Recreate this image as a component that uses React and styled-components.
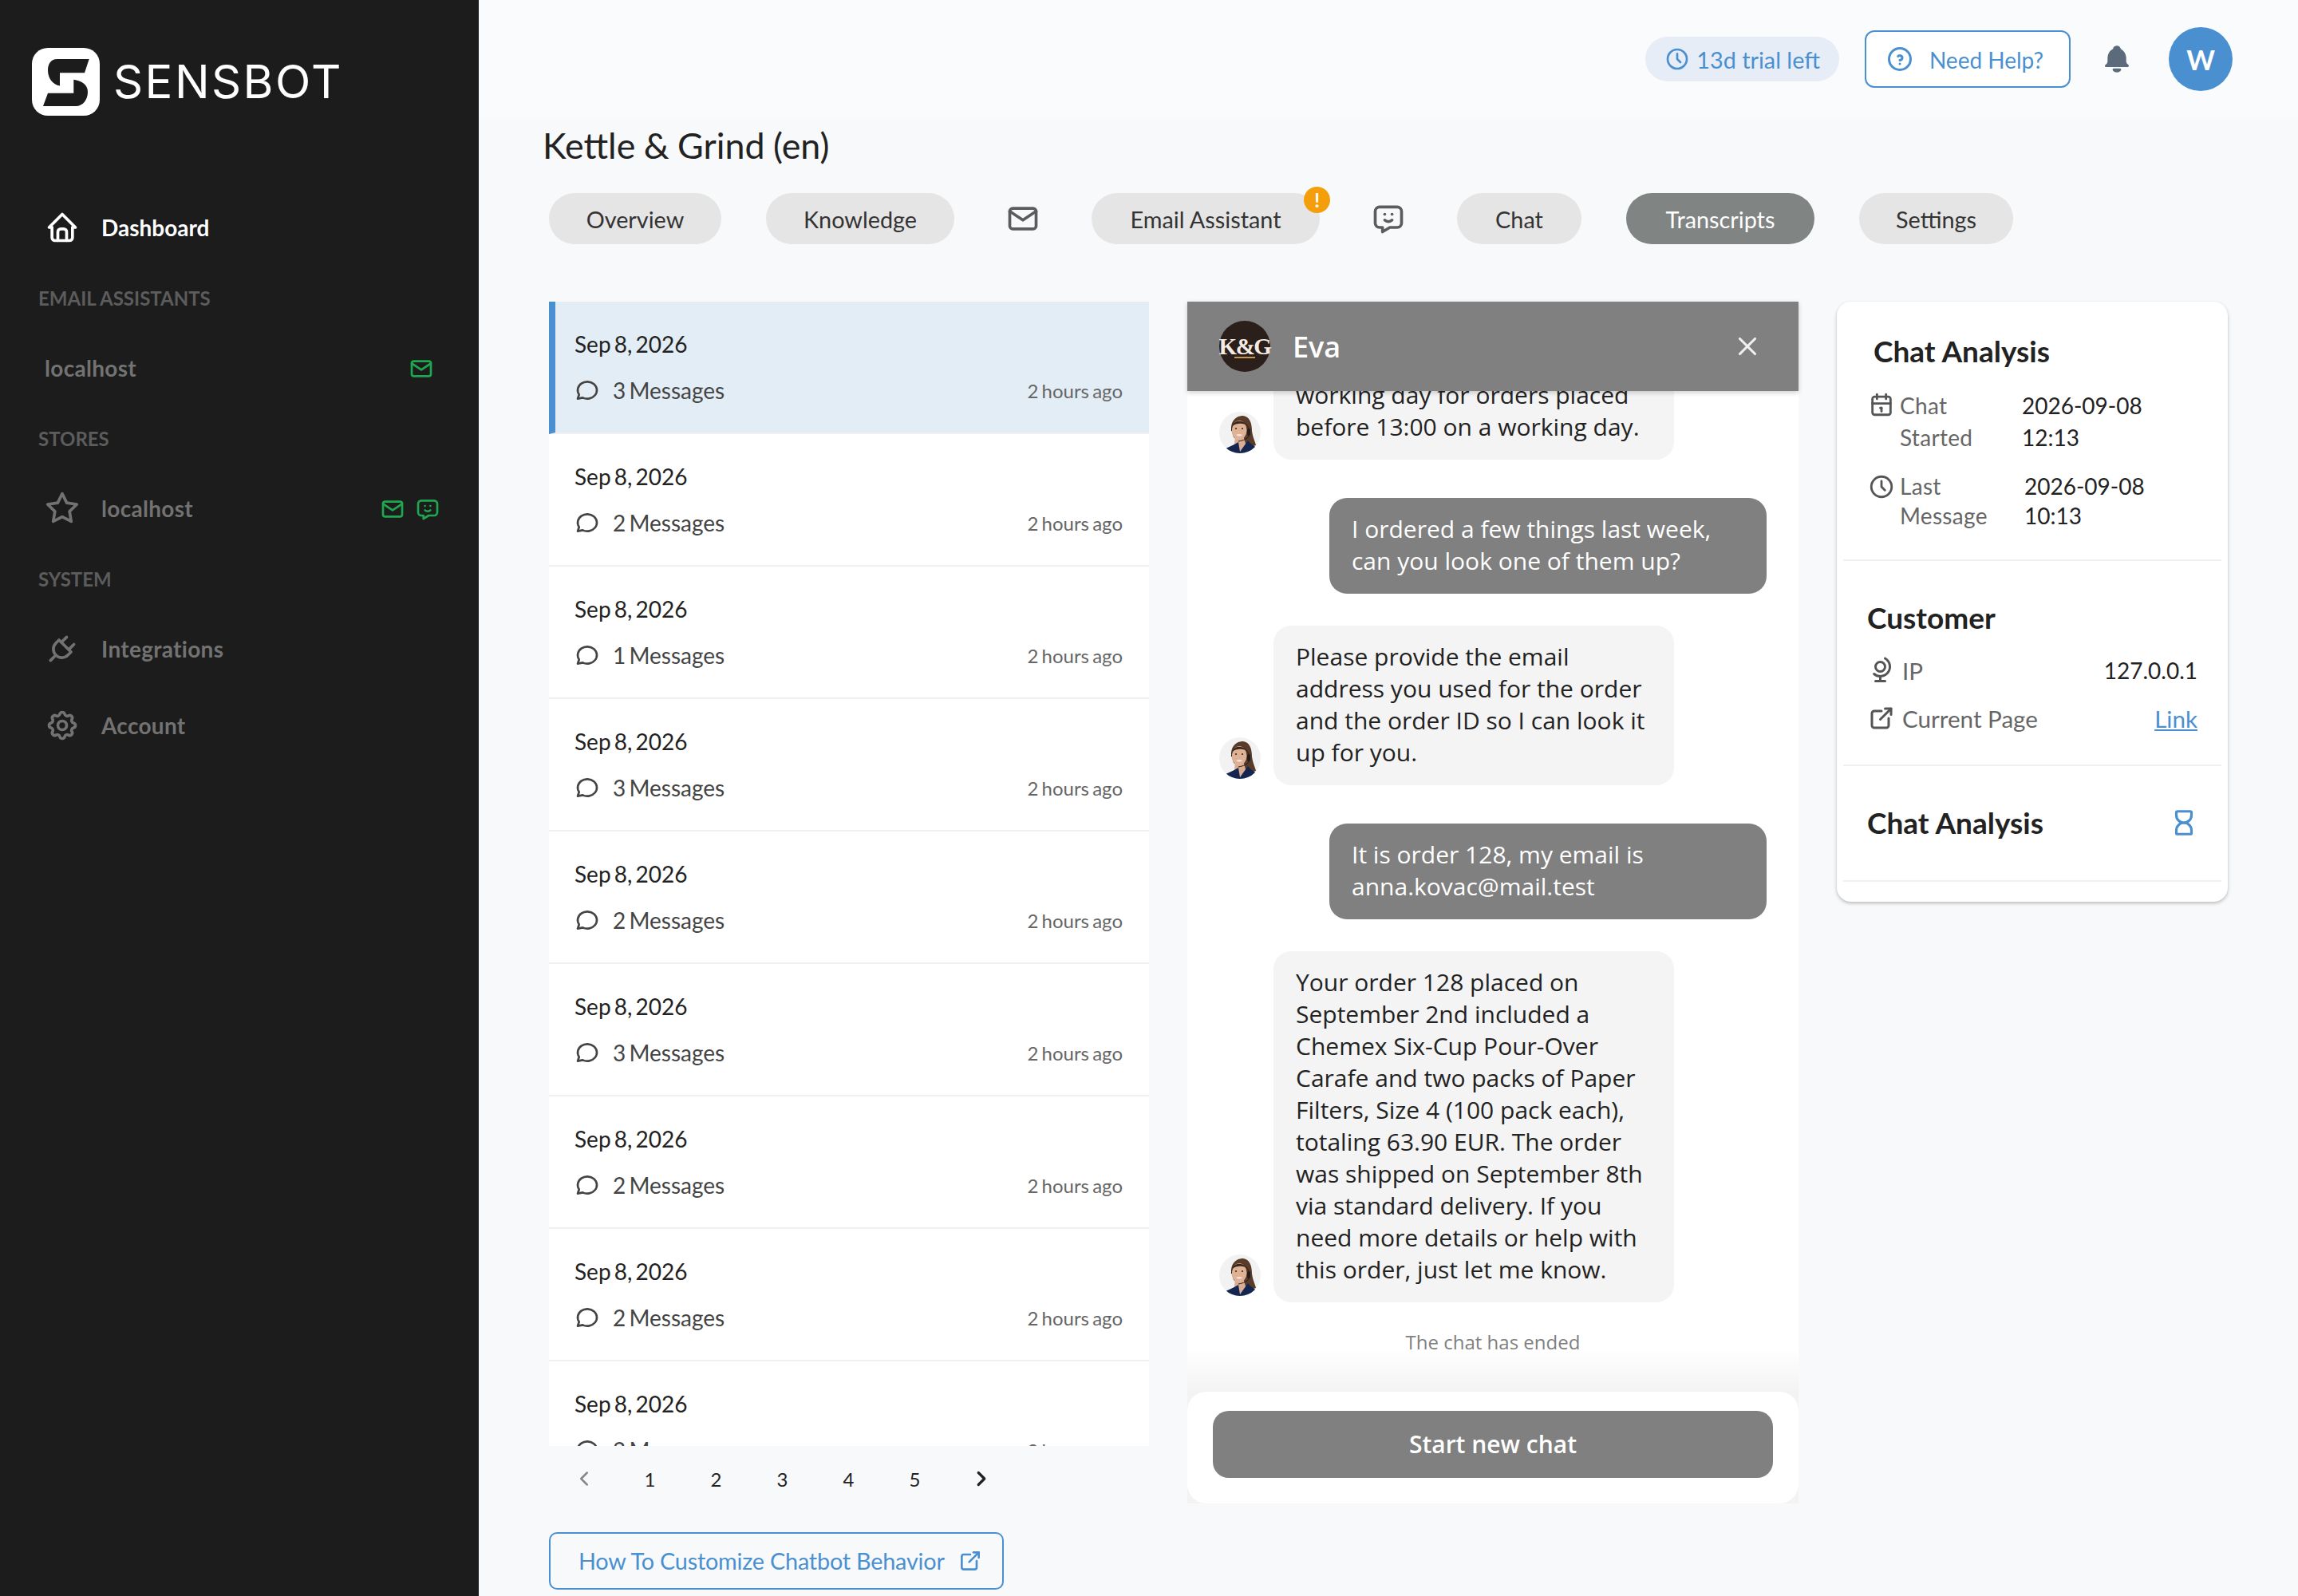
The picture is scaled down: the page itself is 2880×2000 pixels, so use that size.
import styled, { createGlobalStyle } from 'styled-components';
import {
  TbHome, TbStar, TbPlug, TbSettings, TbMail, TbMessageChatbot, TbClock, TbHelpCircle,
  TbBellFilled, TbMessageCircle, TbChevronLeft, TbChevronRight, TbExternalLink, TbX,
  TbCalendar, TbGlobe, TbHourglassEmpty,
} from 'react-icons/tb';

const BLUE = '#4a90d0';
const GREEN = '#1fa750';

const GlobalStyle = createGlobalStyle`
  html, body { margin: 0; padding: 0; background: #f8f9fb; }
  * { box-sizing: border-box; }
`;

const rows = [3, 2, 1, 3, 2, 3, 2, 2, 2];
const pages = ['1', '2', '3', '4', '5'];

function App() {
  return (
    <Shell>
      <GlobalStyle />
      <Sidebar>
        <Brand>
          <svg width="85" height="85" viewBox="0 0 85 85">
            <rect width="85" height="85" rx="20" fill="#fff" />
            <path d="M71.7 14 H31.7 C24 14 20 20 20 28 C20 38 26 46 35 47.5 V31.3 H66 Z" fill="#1c1c1c" />
            <path d="M52.3 39.7 V56.7 H20 L14 73 H55 C64 73 70 65 70 55 C70 46 62 41 52.3 39.7 Z" fill="#1c1c1c" />
          </svg>
          <BrandName>SENSBOT</BrandName>
        </Brand>
        <NavItem $active>
          <NavIcon><TbHome size={44} /></NavIcon>
          <span>Dashboard</span>
        </NavItem>
        <SectionLabel>EMAIL ASSISTANTS</SectionLabel>
        <NavItem $right={56}>
          <span>localhost</span>
          <StatusIcons><TbMail size={32} /></StatusIcons>
        </NavItem>
        <SectionLabel>STORES</SectionLabel>
        <NavItem $right={48}>
          <NavIcon><TbStar size={44} /></NavIcon>
          <span>localhost</span>
          <StatusIcons>
            <TbMail size={32} />
            <TbMessageChatbot size={32} />
          </StatusIcons>
        </NavItem>
        <SectionLabel>SYSTEM</SectionLabel>
        <NavItem>
          <NavIcon><TbPlug size={44} /></NavIcon>
          <span>Integrations</span>
        </NavItem>
        <NavItem>
          <NavIcon><TbSettings size={44} /></NavIcon>
          <span>Account</span>
        </NavItem>
      </Sidebar>

      <Main>
        <TopBar>
          <TrialPill><TbClock size={32} /><TopLabel>13d trial left</TopLabel></TrialPill>
          <HelpButton><TbHelpCircle size={36} /><TopLabel>Need Help?</TopLabel></HelpButton>
          <Bell><TbBellFilled size={40} /></Bell>
          <UserAvatar>W</UserAvatar>
        </TopBar>

        <Content>
          <Title>Kettle &amp; Grind (en)</Title>
          <Tabs>
            <Tab $w={216}>Overview</Tab>
            <Tab $w={236}>Knowledge</Tab>
            <TabIcon><TbMail size={44} /></TabIcon>
            <Tab $w={286}>
              Email Assistant
              <Badge>!</Badge>
            </Tab>
            <TabIcon><TbMessageChatbot size={44} /></TabIcon>
            <Tab $w={156}>Chat</Tab>
            <Tab $w={236} $active>Transcripts</Tab>
            <Tab $w={193}>Settings</Tab>
          </Tabs>

          <Columns>
            <ListColumn>
              <TranscriptList>
                {rows.map((count, i) => (
                  <TranscriptRow key={i} $selected={i === 0}>
                    <RowDate>Sep 8, 2026</RowDate>
                    <RowMeta>
                      <TbMessageCircle size={32} />
                      <RowCount>{count} Messages</RowCount>
                      <RowAgo>2 hours ago</RowAgo>
                    </RowMeta>
                  </TranscriptRow>
                ))}
              </TranscriptList>
              <Pagination>
                <PageItem $muted><TbChevronLeft size={30} /></PageItem>
                {pages.map((p) => <PageItem key={p}>{p}</PageItem>)}
                <PageItem><TbChevronRight size={30} strokeWidth={2.6} /></PageItem>
              </Pagination>
              <GuideLink>How To Customize Chatbot Behavior <TbExternalLink size={32} /></GuideLink>
            </ListColumn>

            <ChatWindow>
              <ChatHeader>
                <ChatLogo>K&amp;G</ChatLogo>
                <ChatName>Eva</ChatName>
                <CloseButton><TbX size={38} /></CloseButton>
              </ChatHeader>
              <Messages>
                <AgentRow>
                  <AgentAvatar />
                  <AgentBubble>Standard delivery takes one<br />working day for orders placed before 13:00 on a working day.</AgentBubble>
                </AgentRow>
                <UserBubble>I ordered a few things last week, can you look one of them up?</UserBubble>
                <AgentRow>
                  <AgentAvatar />
                  <AgentBubble>Please provide the email address you used for the order and the order ID so I can look it up for you.</AgentBubble>
                </AgentRow>
                <UserBubble>It is order 128, my email is anna.kovac@mail.test</UserBubble>
                <AgentRow>
                  <AgentAvatar />
                  <AgentBubble>Your order 128 placed on September 2nd included a Chemex Six-Cup Pour-Over Carafe and two packs of Paper Filters, Size 4 (100 pack each), totaling 63.90 EUR. The order was shipped on September 8th via standard delivery. If you need more details or help with this order, just let me know.</AgentBubble>
                </AgentRow>
                <ChatEnded>The chat has ended</ChatEnded>
              </Messages>
              <ChatFooter>
                <StartButton>Start new chat</StartButton>
              </ChatFooter>
            </ChatWindow>

            <InfoCard>
              <InfoSection $top={40} $bottom={36}>
                <InfoTitle $indent={8}>Chat Analysis</InfoTitle>
                <DateRow $label={153} $gap={26} $lh={40}>
                  <TbCalendar size={34} />
                  <DateLabel>Chat<br />Started</DateLabel>
                  <DateValue>2026-09-08<br />12:13</DateValue>
                </DateRow>
                <DateRow $label={156} $gap={23} $lh={37}>
                  <TbClock size={34} />
                  <DateLabel>Last<br />Message</DateLabel>
                  <DateValue>2026-09-08<br />10:13</DateValue>
                </DateRow>
              </InfoSection>
              <InfoSection $top={49} $bottom={38}>
                <InfoTitle>Customer</InfoTitle>
                <DetailRow $gap={24}>
                  <TbGlobe size={36} />
                  <DetailLabel>IP</DetailLabel>
                  <DetailValue>127.0.0.1</DetailValue>
                </DetailRow>
                <DetailRow $gap={20}>
                  <TbExternalLink size={36} />
                  <DetailLabel>Current Page</DetailLabel>
                  <DetailLink>Link</DetailLink>
                </DetailRow>
              </InfoSection>
              <InfoSection $top={49} $bottom={50}>
                <AnalysisRow>
                  <InfoTitle>Chat Analysis</InfoTitle>
                  <TbHourglassEmpty size={38} />
                </AnalysisRow>
              </InfoSection>
            </InfoCard>
          </Columns>
        </Content>
      </Main>
    </Shell>
  );
}

function AgentAvatar() {
  return (
    <AvatarFrame>
      <svg width="52" height="52" viewBox="0 0 52 52">
        <path d="M15 22 C15 9 23 5 30 5 C38 6 41 14 41 24 C42 32 45 37 46 42 L36 45 L18 32 Z" fill="#5a3a28" />
        <path d="M20 30 L30 30 L34 43 L25 50 L19 41 Z" fill="#d9ad93" />
        <ellipse cx="25" cy="23" rx="9.5" ry="12" fill="#dfb195" />
        <path d="M16 18 C18 11 28 9 34 17 C30 14 22 14 16 18 Z" fill="#4a2f20" />
        <circle cx="21" cy="21" r="1.1" fill="#3a2a22" />
        <circle cx="29" cy="21" r="1.1" fill="#3a2a22" />
        <path d="M21 29 C24 31 27 31 29 29 C27 27.5 23 27.5 21 29 Z" fill="#f3e4df" />
        <path d="M15.5 24 C14 10 36 8 37 24" fill="none" stroke="#222" strokeWidth="1" />
        <rect x="35" y="21" width="4" height="9" rx="2" fill="#1f1f1f" />
        <path d="M37 30 C36 34 30 36 24 37" fill="none" stroke="#222" strokeWidth="1" />
        <path d="M8 46 C14 43 20 41 24 38 L26 50 L36 36 C40 41 44 43 47 45 L40 52 H12 Z" fill="#14264f" />
      </svg>
    </AvatarFrame>
  );
}

export default App;

const Shell = styled.div`
  display: flex;
  width: 2880px;
  height: 2000px;
  overflow: hidden;
  background: #f8f9fb;
  font-family: Lato, 'Liberation Sans', sans-serif;
`;

const Sidebar = styled.aside`
  flex: 0 0 600px;
  padding-top: 60px;
  background: #1c1c1c;
`;

const Brand = styled.div`
  display: flex;
  align-items: center;
  gap: 17px;
  height: 85px;
  margin: 0 0 92px 40px;
`;

const BrandName = styled.span`
  margin-top: -2px;
  color: #fff;
  font-family: Inter, Lato, sans-serif;
  font-size: 58px;
  font-weight: 400;
  letter-spacing: 2.4px;
`;

const NavItem = styled.div`
  display: flex;
  align-items: center;
  height: 96px;
  padding: 0 ${(p) => p.$right || 0}px 0 56px;
  color: ${(p) => (p.$active ? '#fff' : '#727272')};
  font-size: 28px;
  font-weight: 700;
  letter-spacing: ${(p) => (p.$active ? '0' : '0.3px')};
`;

const NavIcon = styled.span`
  display: flex;
  justify-content: center;
  width: 44px;
  margin-right: 27px;
`;

const StatusIcons = styled.span`
  display: flex;
  gap: 12px;
  margin-top: 2px;
  margin-left: auto;
  color: ${GREEN};
`;

const SectionLabel = styled.div`
  display: flex;
  align-items: center;
  height: 80px;
  padding-left: 48px;
  color: #5c5c5c;
  font-size: 24px;
  font-weight: 700;
`;

const Main = styled.main`
  flex: 1;
  min-width: 0;
`;

const TopBar = styled.header`
  display: flex;
  align-items: center;
  justify-content: flex-end;
  height: 148px;
  padding-right: 82px;
  background: #fafbfc;
`;

const TopLabel = styled.span`
  margin-top: 2px;
`;

const TrialPill = styled.div`
  display: flex;
  align-items: center;
  gap: 8px;
  height: 56px;
  padding: 0 24px;
  border-radius: 28px;
  background: #e6edf6;
  color: ${BLUE};
  font-size: 28.8px;
`;

const HelpButton = styled.div`
  display: flex;
  align-items: center;
  gap: 19px;
  height: 72px;
  margin-left: 32px;
  padding: 0 32px 0 24px;
  border: 2px solid ${BLUE};
  border-radius: 12px;
  background: #fff;
  color: ${BLUE};
  font-size: 28px;
`;

const Bell = styled.div`
  display: flex;
  margin: 0 45px 0 38px;
  color: #5b6b7b;
`;

const UserAvatar = styled.div`
  display: flex;
  align-items: center;
  justify-content: center;
  width: 80px;
  height: 80px;
  border-radius: 50%;
  background: ${BLUE};
  color: #fff;
  font-size: 34px;
  font-weight: 700;
`;

const Content = styled.div`
  padding: 4px 88px 0;
`;

const Title = styled.h1`
  height: 60px;
  margin: 0 0 30px -8px;
  color: #222;
  font-size: 44.8px;
  font-weight: 400;
  line-height: 60px;
  word-spacing: -1px;
`;

const Tabs = styled.nav`
  display: flex;
  align-items: center;
  height: 64px;
  margin-bottom: 72px;
  gap: 56px;
`;

const Tab = styled.div`
  position: relative;
  display: flex;
  flex: 0 0 ${(p) => p.$w}px;
  align-items: center;
  justify-content: center;
  height: 64px;
  padding-top: 2px;
  border-radius: 32px;
  background: ${(p) => (p.$active ? '#808483' : '#e5e5e5')};
  color: ${(p) => (p.$active ? '#fff' : '#333')};
  font-size: 28.8px;
`;

const TabIcon = styled.span`
  display: flex;
  margin: 0 8px;
  color: #5c5c5c;
`;

const Badge = styled.span`
  position: absolute;
  top: -8px;
  right: -13px;
  display: flex;
  align-items: center;
  justify-content: center;
  width: 33px;
  height: 33px;
  border-radius: 50%;
  background: #f59e0b;
  color: #fff;
  font-size: 24px;
  font-weight: 700;
`;

const Columns = styled.div`
  display: flex;
  gap: 48px;
  align-items: flex-start;
`;

const ListColumn = styled.section`
  flex: 0 0 752px;
`;

const TranscriptList = styled.div`
  height: 1434px;
  overflow: hidden;
  background: #fff;
`;

const TranscriptRow = styled.div`
  height: 166px;
  padding: ${(p) => (p.$selected ? '33px 33px 0 24px' : '33px 33px 0 32px')};
  border-bottom: 2px solid #f0f0f0;
  border-left: ${(p) => (p.$selected ? `8px solid ${BLUE}` : 'none')};
  background: ${(p) => (p.$selected ? '#e3edf6' : '#fff')};
`;

const RowDate = styled.div`
  color: #222;
  font-size: 28px;
  line-height: 40px;
  word-spacing: -3px;
`;

const RowMeta = styled.div`
  display: flex;
  align-items: center;
  gap: 16px;
  margin-top: 18px;
  height: 40px;
  color: #444;
`;

const RowCount = styled.span`
  color: #444;
  font-size: 28px;
  word-spacing: -3px;
`;

const RowAgo = styled.span`
  margin-left: auto;
  color: #666;
  font-size: 24px;
  word-spacing: -2px;
`;

const Pagination = styled.div`
  display: flex;
  align-items: center;
  height: 82px;
  margin-left: 2px;
`;

const PageItem = styled.span`
  display: flex;
  align-items: center;
  justify-content: center;
  width: 83px;
  color: ${(p) => (p.$muted ? '#888' : '#222')};
  font-size: 24px;
`;

const GuideLink = styled.div`
  display: inline-flex;
  align-items: center;
  gap: 16px;
  width: 570px;
  height: 72px;
  margin-top: 26px;
  padding-left: 35px;
  border: 2px solid ${BLUE};
  border-radius: 10px;
  color: ${BLUE};
  font-size: 28.8px;
  letter-spacing: -0.2px;
  white-space: nowrap;
`;

const ChatWindow = styled.section`
  display: flex;
  flex: 0 0 766px;
  flex-direction: column;
  height: 1506px;
  background: #f3f3f3;
  font-family: 'Open Sans', 'Liberation Sans', sans-serif;
`;

const ChatHeader = styled.header`
  position: relative;
  z-index: 1;
  display: flex;
  flex: 0 0 112px;
  align-items: center;
  padding: 0 40px;
  background: #808080;
  box-shadow: 0 2px 6px rgba(0, 0, 0, 0.2);
  color: #fff;
`;

const ChatLogo = styled.div`
  position: relative;
  display: flex;
  align-items: center;
  justify-content: center;
  width: 64px;
  height: 64px;
  border-radius: 50%;
  background: #2a1f1a;
  color: #f4ece2;
  font-family: 'Liberation Serif', serif;
  font-size: 29px;
  font-weight: 700;
  letter-spacing: -1.5px;

  &::after {
    content: '';
    position: absolute;
    left: 19px;
    bottom: 17px;
    width: 26px;
    height: 2px;
    background: #c8964f;
  }
`;

const ChatName = styled.span`
  margin-left: 28px;
  font-size: 36px;
  font-weight: 600;
`;

const CloseButton = styled.span`
  display: flex;
  margin-left: auto;
  margin-right: 5px;
  color: #f0f0f0;
`;

const Messages = styled.div`
  display: flex;
  flex: 1;
  flex-direction: column;
  justify-content: flex-end;
  min-height: 0;
  overflow: hidden;
  padding: 0 40px;
  background: linear-gradient(to bottom, #fff calc(100% - 54px), #f3f3f3);
`;

const AgentRow = styled.div`
  display: flex;
  flex-shrink: 0;
  align-items: flex-end;
  gap: 16px;
  margin-bottom: 48px;
`;

const AvatarFrame = styled.div`
  display: flex;
  flex: 0 0 52px;
  height: 52px;
  margin-bottom: 8px;
  border-radius: 50%;
  background: #f2f2f2;
  overflow: hidden;
`;

const AgentBubble = styled.div`
  width: 502px;
  padding: 19px 28px 21px;
  border-radius: 22px;
  background: #f4f4f4;
  color: #222;
  font-size: 30px;
  line-height: 40px;
`;

const UserBubble = styled.div`
  flex-shrink: 0;
  align-self: flex-end;
  width: 548px;
  margin-bottom: 40px;
  padding: 19px 28px 21px;
  border-radius: 22px;
  background: #808080;
  color: #fff;
  font-size: 30px;
  line-height: 40px;
`;

const ChatEnded = styled.div`
  flex-shrink: 0;
  height: 36px;
  margin: -16px 0 44px;
  color: #808080;
  font-size: 24px;
  line-height: 36px;
  text-align: center;
`;

const ChatFooter = styled.div`
  flex: 0 0 140px;
  padding: 24px 32px;
  border-radius: 24px;
  background: #fff;
`;

const StartButton = styled.div`
  display: flex;
  align-items: center;
  justify-content: center;
  height: 84px;
  padding-bottom: 2px;
  border-radius: 20px;
  background: #808080;
  color: #fff;
  font-size: 30px;
  font-weight: 600;
`;

const InfoCard = styled.aside`
  flex: 0 0 490px;
  height: 752px;
  padding: 0 8px;
  border-radius: 18px;
  background: #fff;
  box-shadow: 0 2px 4px rgba(0, 0, 0, 0.25);
`;

const InfoSection = styled.div`
  padding: ${(p) => p.$top}px 30px ${(p) => p.$bottom}px;
  border-bottom: 2px solid #f0f0f0;
`;

const InfoTitle = styled.h3`
  height: 44px;
  margin: 0 0 0 ${(p) => p.$indent || 0}px;
  color: #222;
  font-size: 37px;
  font-weight: 700;
  line-height: 44px;
`;

const DateRow = styled.div`
  display: grid;
  grid-template-columns: 40px ${(p) => p.$label}px auto;
  margin-top: ${(p) => p.$gap}px;
  margin-left: 1px;
  font-size: 28px;
  line-height: ${(p) => p.$lh}px;

  svg {
    margin-top: 2px;
    color: #555;
  }
`;

const DateLabel = styled.div`
  color: #666;
  letter-spacing: 0.3px;
`;

const DateValue = styled.div`
  color: #222;
`;

const DetailRow = styled.div`
  display: flex;
  align-items: center;
  gap: 8px;
  height: 40px;
  margin-top: ${(p) => p.$gap}px;
  color: #555;
`;

const DetailLabel = styled.span`
  color: #666;
  font-size: 29.6px;
`;

const DetailValue = styled.span`
  margin-left: auto;
  color: #222;
  font-size: 28px;
`;

const DetailLink = styled.span`
  margin-left: auto;
  color: ${BLUE};
  font-size: 29.6px;
  text-decoration: underline;
`;

const AnalysisRow = styled.div`
  display: flex;
  align-items: center;
  justify-content: space-between;
  margin-right: -2px;
  color: ${BLUE};
`;
